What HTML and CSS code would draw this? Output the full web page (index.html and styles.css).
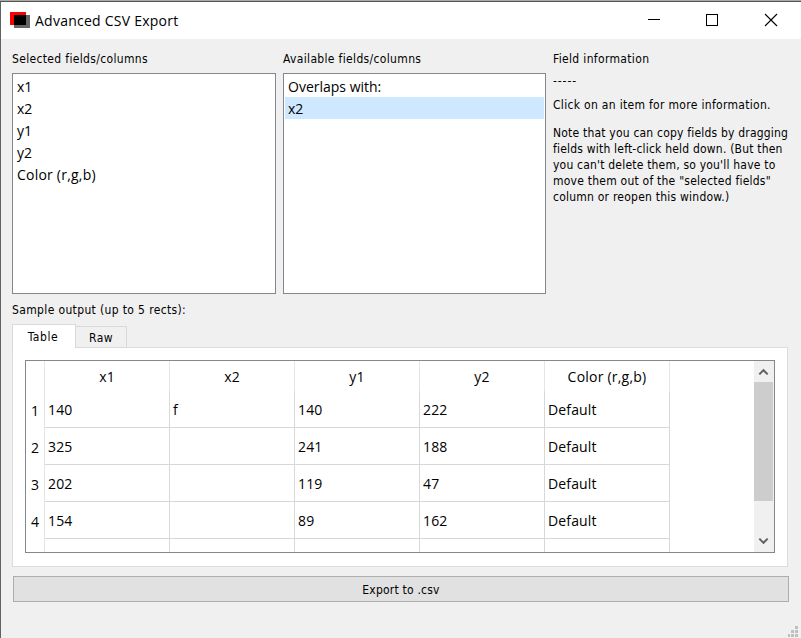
FILE: index.html
```html
<!DOCTYPE html>
<html lang="en">
<head>
<meta charset="utf-8">
<title>Advanced CSV Export</title>
<link rel="stylesheet" href="styles.css">
</head>
<body>
<div class="window">
  <header class="titlebar">
    <svg class="app-icon" width="20" height="16" viewBox="0 0 20 16" shape-rendering="crispEdges"><path fill="#f00" d="M0 0h16v13H0z"/><path fill="#666" d="M4 3h16v13H4z"/><path fill="#000" d="M4 3h12v10H4z"/></svg>
    <h1 class="title">Advanced CSV Export</h1>
    <div class="controls">
      <svg width="12" height="12" viewBox="0 0 12 12" shape-rendering="crispEdges"><path fill="#000" d="M0 5h12v1H0z"/></svg>
      <svg width="12" height="12" viewBox="0 0 12 12" shape-rendering="crispEdges"><path fill="none" stroke="#000" d="M.5 .5h11v11H.5z"/></svg>
      <svg class="close" width="12" height="12" viewBox="0 0 12 12"><path fill="none" stroke="#000" stroke-width="1.1" d="M0 0l12 12M12 0L0 12"/></svg>
    </div>
  </header>
  <main class="content">
    <div class="columns">
      <section class="field-column">
        <h2 class="label">Selected fields/columns</h2>
        <ul class="list">
          <li>x1</li><li>x2</li><li>y1</li><li>y2</li><li class="color-text">Color (r,g,b)</li>
        </ul>
      </section>
      <section class="field-column">
        <h2 class="label">Available fields/columns</h2>
        <ul class="list">
          <li>Overlaps with:</li><li class="current">x2</li>
        </ul>
      </section>
      <section class="info">
        <h2 class="label">Field information</h2>
        <p class="dashes">-----</p>
        <p class="hint">Click on an item for more information.</p>
        <p class="note">Note that you can copy fields by dragging<br>fields with left-click held down. (But then<br>you can't delete them, so you'll have to<br><span class="wide">move them out of the "selected fields"</span><br><span class="wide">column or reopen this window.)</span></p>
      </section>
    </div>
    <h2 class="label sample-label">Sample output (up to 5 rects):</h2>
    <div class="tabs"><div class="tab active">Table</div><div class="tab">Raw</div></div>
    <div class="panel">
      <div class="table-frame">
        <table class="grid">
          <thead><tr><th class="index"></th><th>x1</th><th>x2</th><th>y1</th><th>y2</th><th class="color-text">Color (r,g,b)</th></tr></thead>
          <tbody>
            <tr><th class="index">1</th><td>140</td><td>f</td><td>140</td><td>222</td><td>Default</td></tr>
            <tr><th class="index">2</th><td>325</td><td></td><td>241</td><td>188</td><td>Default</td></tr>
            <tr><th class="index">3</th><td>202</td><td></td><td>119</td><td>47</td><td>Default</td></tr>
            <tr><th class="index">4</th><td>154</td><td></td><td>89</td><td>162</td><td>Default</td></tr>
            <tr><th class="index"></th><td></td><td></td><td></td><td></td><td></td></tr>
          </tbody>
        </table>
        <div class="scrollbar">
          <svg class="arrow" width="20" height="21" viewBox="0 0 20 21"><path fill="none" stroke="#606060" stroke-width="2" d="M5.3 13.4L9.5 9.2l4.2 4.2"/></svg>
          <div class="thumb"></div>
          <svg class="arrow down" width="20" height="21" viewBox="0 0 20 21"><path fill="none" stroke="#606060" stroke-width="2" d="M5.3 7.6l4.2 4.2 4.2-4.2"/></svg>
        </div>
      </div>
    </div>
    <button class="export">Export to .csv</button>
  </main>
  <svg class="grip" width="10" height="11" viewBox="0 0 10 11" shape-rendering="crispEdges"><path fill="#bfbfbf" d="M7 0h3v3H7zM3 4h3v3H3zM7 4h3v3H7zM0 8h2v3H0zM3 8h3v3H3zM7 8h3v3H7z"/></svg>
</div>
</body>
</html>
```
FILE: styles.css
```css
* { box-sizing: border-box; margin: 0; padding: 0; }
body { width: 801px; height: 638px; overflow: hidden; background: #a9a9a9; }
h1, h2, th { font-weight: normal; }
.window {
  position: relative;
  height: 637px;
  margin-top: 1px;
  border-top: 1px solid #555;
  border-left: 1px solid #626262;
  background: #f0f0f0;
  color: #000;
  font: 12px/16px "DejaVu Sans Condensed", "DejaVu Sans", sans-serif;
  font-stretch: condensed;
  letter-spacing: .2px;
}
.titlebar { display: flex; align-items: center; height: 37px; padding: 0 24px 1px 9px; background: #fff; }
.title { margin: 1px 0 0 5px; font: 14px/20px "Open Sans", sans-serif; letter-spacing: .24px; }
.controls { display: flex; gap: 46px; margin-left: auto; }
.controls svg { overflow: visible; }
.controls .close { margin-left: 1px; }
.content { padding: 11px 12px 0 11px; }
.columns { display: grid; grid-template-columns: 264px 263px 1fr; column-gap: 7px; height: 244px; }
.label { height: 23px; font-size: 12px; line-height: 18px; letter-spacing: .34px; white-space: nowrap; }
.list {
  height: 221px;
  padding: 1px;
  border: 1px solid #828790;
  background: #fff;
  list-style: none;
  font: 14px/24px "Open Sans", sans-serif;
  letter-spacing: 0;
}
.list li { height: 22px; padding-left: 3px; }
.list .current { background: #cde8ff; }
.color-text { letter-spacing: .22px; }
.info p { white-space: nowrap; }
.info .hint { margin-top: 8px; letter-spacing: .31px; }
.note { margin-top: 12px; }
.note .wide { letter-spacing: .23px; }
.sample-label { height: 30px; padding-top: 7px; line-height: 18px; letter-spacing: .36px; }
.tabs { position: relative; display: flex; align-items: flex-end; height: 24px; margin-bottom: -1px; letter-spacing: .4px; }
.tab { height: 22px; width: 52px; margin-left: -1px; border: 1px solid #d9d9d9; text-align: center; line-height: 22px; }
.tab.active { width: 64px; height: 24px; margin-left: 0; padding-right: 2px; border-bottom: 0; background: #fff; line-height: 25px; letter-spacing: .6px; }
.panel { width: 776px; height: 220px; padding: 12px; border: 1px solid #dcdcdc; background: #fff; }
.table-frame { display: flex; justify-content: space-between; width: 750px; height: 193px; overflow: hidden; border: 1px solid #828790; }
.grid { flex: none; width: 644px; height: 215px; border-spacing: 0; table-layout: fixed; font: 14px/20px "Open Sans", sans-serif; letter-spacing: .15px; }
.grid th, .grid td { width: 125px; padding-top: 2px; border-right: 1px solid #d8d8d8; }
.grid thead th { height: 30px; border-color: #e5e5e5; }
.grid td { height: 37px; padding-left: 3px; border-bottom: 1px solid #d8d8d8; }
.grid .index { width: 19px; border-color: #e5e5e5; }
.grid .color-text { letter-spacing: .22px; }
.scrollbar { display: flex; flex-direction: column; width: 20px; background: #f0f0f0; }
.thumb { width: 19px; height: 119px; background: #cdcdcd; }
.arrow { flex: none; }
.arrow.down { margin-top: auto; }
.export { display: block; width: 776px; height: 26px; margin: 9px 0 0 1px; padding-top: 2px; border: 1px solid #adadad; background: #e1e1e1; color: #000; font: inherit; letter-spacing: .22px; }
.dashes { letter-spacing: .9px; }
.grip { position: absolute; right: 3px; bottom: 1px; }
```
